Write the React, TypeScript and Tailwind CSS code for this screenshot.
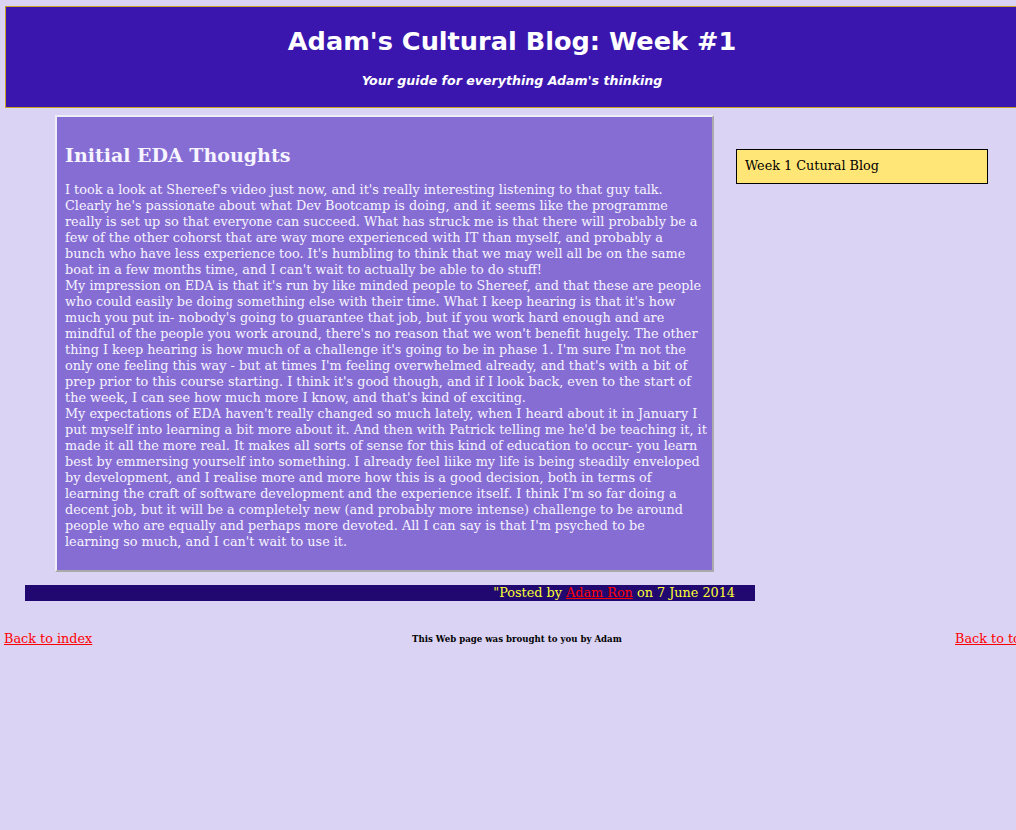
export default function App() {
  return (
    <div className="w-[1016px] min-h-[830px] overflow-hidden bg-[#dbd3f3] pt-[6px] font-['DejaVu_Serif',serif] text-[12.8px] leading-[16px] text-black">
      <header className="ml-[5px] w-[1014px] h-[102px] border border-[#c9a227] bg-[#3a16ae] text-center font-['DejaVu_Sans',sans-serif] text-white">
        <h1 className="pt-[19px] text-[25.6px] leading-[30px] font-bold">Adam's Cultural Blog: Week #1</h1>
        <p className="mt-[17px] text-[12.6px] leading-[16px] font-bold italic">Your guide for everything Adam's thinking</p>
      </header>

      <div className="mt-[7px] flex items-start">
        <article className="ml-[55px] w-[659px] border-2 border-t-[#eeeef6] border-l-[#eeeef6] border-r-[#aaaaaa] border-b-[#aaaaaa] bg-[#866dd4] pl-[8px] pr-[8px] pt-[26px] pb-[20px] text-[#f6f4ff]">
          <h2 className="text-[19px] leading-[24px] font-bold mb-[15px]">Initial EDA Thoughts</h2>
          <p>
            I took a look at Shereef's video just now, and it's really interesting listening to that guy talk. Clearly he's passionate about what Dev Bootcamp is doing, and it seems like the programme really is set up so that everyone can succeed. What has struck me is that there will probably be a few of the other cohorst that are way more experienced with IT than myself, and probably a bunch who have less experience too. It's humbling to think that we may well all be on the same boat in a few months time, and I can't wait to actually be able to do stuff!
          </p>
          <p>
            My impression on EDA is that it's run by like minded people to Shereef, and that these are people who could easily be doing something else with their time. What I keep hearing is that it's how much you put in- nobody's going to guarantee that job, but if you work hard enough and are mindful of the people you work around, there's no reason that we won't benefit hugely. The other thing I keep hearing is how much of a challenge it's going to be in phase 1. I'm sure I'm not the only one feeling this way - but at times I'm feeling overwhelmed already, and that's with a bit of prep prior to this course starting. I think it's good though, and if I look back, even to the start of the week, I can see how much more I know, and that's kind of exciting.
          </p>
          <p className="-mr-[4px]">
            My expectations of EDA haven't really changed so much lately, when I heard about it in January I put myself into learning a bit more about it. And then with Patrick telling me he'd be teaching it, it made it all the more real. It makes all sorts of sense for this kind of education to occur- you learn best by emmersing yourself into something. I already feel liike my life is being steadily enveloped by development, and I realise more and more how this is a good decision, both in terms of learning the craft of software development and the experience itself. I think I'm so far doing a decent job, but it will be a completely new (and probably more intense) challenge to be around people who are equally and perhaps more devoted. All I can say is that I'm psyched to be
            <br />
            learning so much, and I can't wait to use it.
          </p>
        </article>

        <aside className="ml-[22px] mt-[34px] w-[252px] h-[35px] border border-black bg-[#ffe677] pl-[8px] pt-[8px]">
          Week 1 Cutural Blog
        </aside>
      </div>

      <div className="mt-[13px] ml-[25px] w-[730px] h-[16px] bg-[#200870] pr-[20px] text-right text-[#ffff33]">
        "Posted by <a href="#" className="text-[#ff0000] underline">Adam Ron</a> on 7 June 2014
      </div>

      <footer className="mt-[30px] flex items-center whitespace-nowrap">
        <div className="pl-[4px] w-[412px] shrink-0">
          <a href="#" className="text-[#ff0000] underline">Back to index</a>
        </div>
        <div className="w-[543px] shrink-0 text-[8.6px] font-bold">This Web page was brought to you by Adam</div>
        <div className="shrink-0">
          <a href="#" className="text-[#ff0000] underline">Back to top</a>
        </div>
      </footer>
    </div>
  );
}
